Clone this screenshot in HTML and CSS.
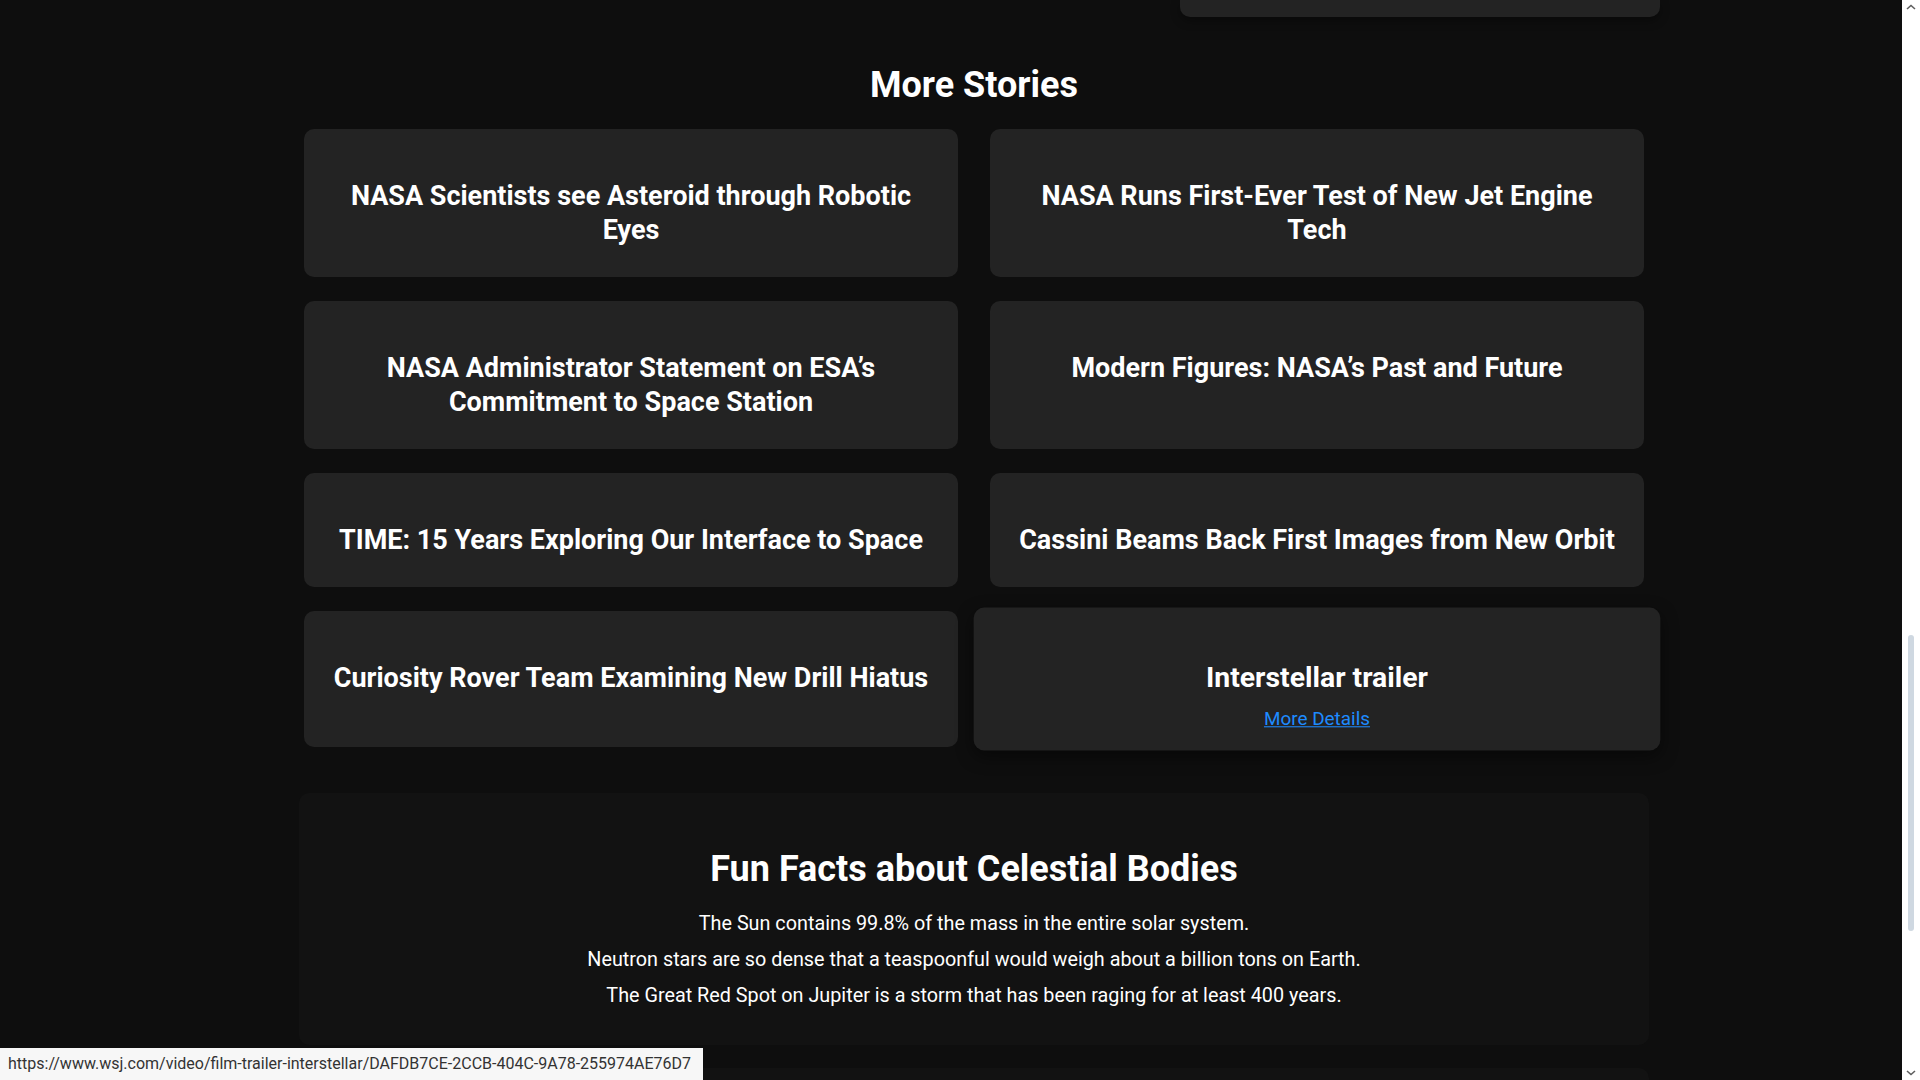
FILE: index.html
```html
<!DOCTYPE html>
<html lang="en">
<head>
<meta charset="utf-8">
<title>More Stories</title>
<link rel="stylesheet" href="styles.css">
</head>
<body>
<div class="page">
  <div class="prev"><div class="prev-card"></div></div>

  <section class="stories">
    <h2 class="section-title">More Stories</h2>
    <div class="grid">
      <article class="card"><h3 class="card-title">NASA Scientists see Asteroid through Robotic Eyes</h3></article>
      <article class="card"><h3 class="card-title">NASA Runs First-Ever Test of New Jet Engine Tech</h3></article>
      <article class="card"><h3 class="card-title">NASA Administrator Statement on ESA’s Commitment to Space Station</h3></article>
      <article class="card"><h3 class="card-title">Modern Figures: NASA’s Past and Future</h3></article>
      <article class="card"><h3 class="card-title">TIME: 15 Years Exploring Our Interface to Space</h3></article>
      <article class="card"><h3 class="card-title">Cassini Beams Back First Images from New Orbit</h3></article>
      <article class="card"><h3 class="card-title">Curiosity Rover Team Examining New Drill Hiatus</h3></article>
      <article class="card card-hover"><h3 class="card-title">Interstellar trailer</h3><a class="card-link" href="#">More Details</a></article>
    </div>
  </section>

  <section class="facts">
    <h2 class="facts-title">Fun Facts about Celestial Bodies</h2>
    <p class="fact">The Sun contains 99.8% of the mass in the entire solar system.</p>
    <p class="fact">Neutron stars are so dense that a teaspoonful would weigh about a billion tons on Earth.</p>
    <p class="fact">The Great Red Spot on Jupiter is a storm that has been raging for at least 400 years.</p>
  </section>

  <section class="next"></section>
</div>

<div class="scrollbar">
  <svg class="sb-arrow sb-up" width="10" height="6" viewBox="0 0 10 6"><path d="M1 5 L5 1.5 L9 5" fill="none" stroke="#5f5f5f" stroke-width="1.6"/></svg>
  <div class="sb-thumb"></div>
  <svg class="sb-arrow sb-down" width="10" height="6" viewBox="0 0 10 6"><path d="M1 1 L5 4.5 L9 1" fill="none" stroke="#5f5f5f" stroke-width="1.6"/></svg>
</div>

<div class="status">https://www.wsj.com/video/film-trailer-interstellar/DAFDB7CE-2CCB-404C-9A78-255974AE76D7</div>
</body>
</html>
```
FILE: styles.css
```css
html, body {
  margin: 0;
  padding: 0;
  height: 100%;
  overflow: hidden;
  background: #0e0e0e;
}

body {
  font-family: Roboto, "Liberation Sans", Arial, sans-serif;
  color: #ffffff;
}

.page {
  width: 1902px;
  box-sizing: border-box;
  padding-left: 46px;
}

.prev,
.stories,
.facts,
.next {
  width: 1350px;
  margin-left: auto;
  margin-right: auto;
}

.prev {
  display: flex;
  justify-content: flex-end;
  height: 17px;
}

.prev-card {
  width: 480px;
  height: 17px;
  margin-right: -11px;
  background: #232323;
  border-radius: 0 0 10px 10px;
  box-shadow: 0 4px 10px rgba(0, 0, 0, 0.35);
}

.section-title {
  margin: 47px 0 23px;
  text-align: center;
  font-size: 36px;
  line-height: 42px;
  font-weight: 700;
}

.grid {
  display: grid;
  grid-template-columns: 1fr 1fr;
  column-gap: 32px;
  row-gap: 24px;
  margin: 0 5px;
}

.card {
  background: #232323;
  border-radius: 10px;
  padding: 20px 24px;
  text-align: center;
}

.card-title {
  margin: 29.5px 0 10.5px;
  font-size: 27px;
  line-height: 34px;
  font-weight: 700;
}

.card-hover {
  position: relative;
  z-index: 2;
  transform: scale(1.05);
  box-shadow: 0 6px 16px rgba(0, 0, 0, 0.45);
}

.card-link {
  display: inline-block;
  margin-top: 1px;
  font-size: 18px;
  line-height: 21px;
  color: #1e8bff;
  text-decoration: underline;
}

.facts {
  margin-top: 46px;
  background: #121212;
  border-radius: 10px;
  padding: 32px 20px;
  box-sizing: border-box;
  height: 252px;
  text-align: center;
}

.facts-title {
  margin: 22.5px 0 22.5px;
  font-size: 36px;
  line-height: 42px;
  font-weight: 700;
}

.fact {
  margin: 0 0 12px;
  font-size: 19.8px;
  line-height: 24px;
}

.next {
  margin-top: 23px;
  height: 120px;
  background: #121212;
  border-radius: 10px;
}

.scrollbar {
  position: fixed;
  top: 0;
  right: 0;
  width: 18px;
  height: 1080px;
  background: #ffffff;
}

.sb-arrow {
  position: absolute;
  left: 4px;
}

.sb-up {
  top: 4px;
}

.sb-down {
  bottom: 4px;
}

.sb-thumb {
  position: absolute;
  left: 6px;
  top: 635px;
  width: 6px;
  height: 296px;
  border-radius: 3px;
  background: #cfd8e1;
}

.status {
  position: fixed;
  left: 0;
  bottom: 0;
  height: 32px;
  width: 703px;
  box-sizing: border-box;
  padding: 0 8px;
  background: #f7f7f7;
  color: #333333;
  font-family: Roboto, "Noto Sans", sans-serif;
  font-size: 16px;
  line-height: 32px;
  white-space: nowrap;
  overflow: hidden;
}
```
